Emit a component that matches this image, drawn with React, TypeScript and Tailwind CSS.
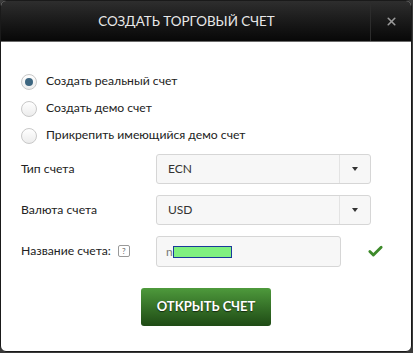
import { Check, X } from "lucide-react";

function Radio({ checked, label }: { checked?: boolean; label: string }) {
  return (
    <label className="flex h-[27px] items-center gap-[9px]">
      <span className="flex h-[16px] w-[16px] items-center justify-center rounded-full border border-[#c8c8c8] bg-gradient-to-b from-white to-[#ececec]">
        {checked && <span className="h-[8px] w-[8px] rounded-full bg-[#3d6680]" />}
      </span>
      <span className="text-[12.2px] text-[#222]">{label}</span>
    </label>
  );
}

function Select({ value }: { value: string }) {
  return (
    <div className="flex h-[30px] w-[215px] items-center rounded-[3px] border border-[#d6d6d6] bg-[#f7f7f7]">
      <span className="flex-1 pl-[11px] text-[12px] text-[#333]">{value}</span>
      <span className="flex h-full w-[31px] items-center justify-center border-l border-[#e3e3e3]">
        <svg width="6" height="4" viewBox="0 0 6 4">
          <path d="M0 0h6L3 4z" fill="#333" />
        </svg>
      </span>
    </div>
  );
}

export default function App() {
  return (
    <div className="h-[353px] w-[413px] bg-[#3a3a3a] font-['Lato',sans-serif]">
      <div className="flex h-[352px] w-[412px] flex-col overflow-hidden rounded-[6px] border border-[#1a1a1a] bg-white">
        <div className="flex h-[41px] items-center border-b border-[#6a6a6a] bg-gradient-to-b from-[#2e2e2e] to-[#080808]">
          <div className="flex-1 pl-[2px] text-center text-[13.4px] text-[#e8e8e8]">СОЗДАТЬ ТОРГОВЫЙ СЧЕТ</div>
          <div className="flex h-full w-[41px] items-center justify-center border-l border-[#2c2c2c]">
            <X size={13} strokeWidth={3} className="text-[#9a9a9a]" />
          </div>
        </div>

        <div className="flex flex-1 flex-col px-[20px] pt-[26px]">
          <div className="flex flex-col">
            <Radio checked label="Создать реальный счет" />
            <Radio label="Создать демо счет" />
            <Radio label="Прикрепить имеющийся демо счет" />
          </div>

          <div className="mt-[5px] flex flex-col gap-[11px]">
            <div className="flex items-center">
              <span className="w-[135px] text-[12.2px] text-[#222]">Тип счета</span>
              <Select value="ECN" />
            </div>
            <div className="flex items-center">
              <span className="w-[135px] text-[12.2px] text-[#222]">Валюта счета</span>
              <Select value="USD" />
            </div>
            <div className="flex items-center">
              <span className="flex w-[135px] items-center gap-[7px] text-[12.2px] text-[#222]">
                Название счета:
                <span className="flex h-[12px] w-[12px] items-center justify-center rounded-[2px] border border-[#999] text-[8px] leading-none text-[#666]">
                  ?
                </span>
              </span>
              <div className="flex h-[31px] w-[185px] items-center rounded-[3px] border border-[#d6d6d6] bg-[#f7f7f7] pl-[9px]">
                <span className="text-[12px] text-[#777]">n</span>
                <span className="h-[12px] w-[59px] border border-[#1a3a9a] bg-[#80f080]" />
              </div>
              <Check size={17} strokeWidth={4} className="ml-[26px] text-[#3d8a2a]" />
            </div>
          </div>

          <div className="mt-[21px] flex justify-center">
            <button className="h-[38px] w-[130px] rounded-[3px] bg-gradient-to-b from-[#4e9a3c] to-[#1f4b15] text-[13px] font-bold text-white [text-shadow:0_1px_1px_rgba(0,0,0,0.6)]">
              ОТКРЫТЬ СЧЕТ
            </button>
          </div>
        </div>
      </div>
    </div>
  );
}
